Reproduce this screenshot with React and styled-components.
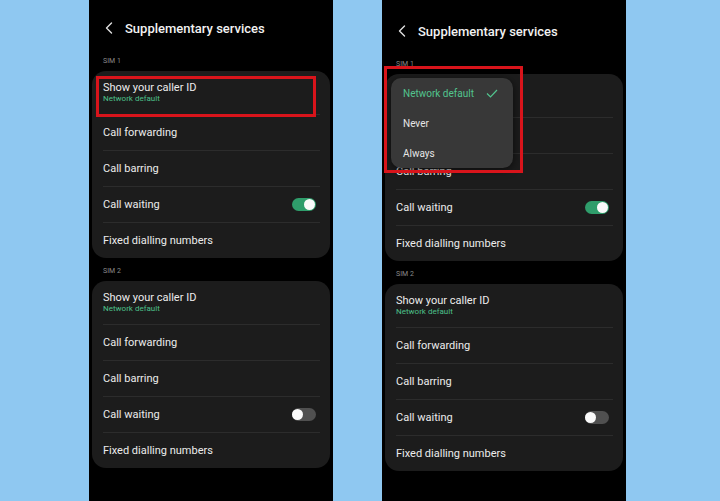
import React from 'react';
import styled, { createGlobalStyle } from 'styled-components';

const GlobalStyle = createGlobalStyle`
  html, body {
    margin: 0;
    padding: 0;
    background: #8fc8f1;
  }
  body {
    font-family: Roboto, "Liberation Sans", sans-serif;
  }
`;

const Page = styled.div`
  width: 720px;
  height: 501px;
  display: flex;
  gap: 49px;
  padding-left: 89px;
  box-sizing: border-box;
  overflow: hidden;
  background: #8fc8f1;
`;

const Phone = styled.div`
  position: relative;
  display: flex;
  flex-direction: column;
  width: 244px;
  height: 501px;
  background: #000;
  padding: ${p => p.$shift}px 3px 0;
  box-sizing: border-box;
`;

const Header = styled.div`
  display: flex;
  align-items: center;
  height: 18px;
  margin: 19px 0 11px;
  padding-left: 13px;
`;

const Back = styled.svg`
  width: 8px;
  height: 12px;
  margin-right: 12px;
`;

const Title = styled.div`
  color: #f2f2f2;
  font-size: 13px;
  font-weight: 500;
`;

const SimLabel = styled.div`
  color: #8a8a8a;
  font-size: 7px;
  line-height: 10px;
  margin: ${p => (p.$first ? 8 : 8)}px 0 5px 11px;
`;

const Card = styled.div`
  background: #1c1c1c;
  border-radius: 14px;
`;

const Row = styled.div`
  display: flex;
  align-items: center;
  justify-content: space-between;
  height: ${p => (p.$tall ? 43 : 36)}px;
  margin: 0 10px 0 11px;
  padding-right: 4px;
  border-top: ${p => (p.$tall ? 'none' : '1px solid #2c2c2c')};
  box-sizing: border-box;
`;

const RowText = styled.div`
  display: flex;
  flex-direction: column;
`;

const RowTitle = styled.span`
  color: #ececec;
  font-size: 11px;
  line-height: 13px;
`;

const RowSub = styled.span`
  color: #4cc08a;
  font-size: 8px;
  line-height: 10px;
`;

const Toggle = styled.div`
  position: relative;
  width: 24px;
  height: 13px;
  border-radius: 7px;
  background: ${p => (p.$on ? '#2f9d6b' : '#505050')};
  &::after {
    content: '';
    position: absolute;
    top: 1px;
    ${p => (p.$on ? 'right: 1px;' : 'left: 0;')}
    width: 11px;
    height: 11px;
    border-radius: 50%;
    background: #fafafa;
  }
`;

const Highlight = styled.div`
  position: absolute;
  left: ${p => p.$x}px;
  top: ${p => p.$y}px;
  width: ${p => p.$w}px;
  height: ${p => p.$h}px;
  border: 3px solid #d8141b;
  box-sizing: border-box;
  z-index: 3;
`;

const Popup = styled.div`
  position: absolute;
  left: 9px;
  top: 78px;
  width: 122px;
  height: 90px;
  background: #383838;
  border-radius: 10px;
  box-shadow: 0 2px 8px rgba(0, 0, 0, 0.6);
  z-index: 2;
`;

const Option = styled.div`
  display: flex;
  align-items: center;
  height: 30px;
  padding-left: 12px;
  gap: 12px;
  font-size: 10px;
  color: ${p => (p.$selected ? '#52c48e' : '#e6e6e6')};
`;

const Check = styled.svg`
  width: 12px;
  height: 9px;
`;

const SimCard = ({ on }) => (
  <Card>
    <Row $tall>
      <RowText>
        <RowTitle>Show your caller ID</RowTitle>
        <RowSub>Network default</RowSub>
      </RowText>
    </Row>
    <Row><RowTitle>Call forwarding</RowTitle></Row>
    <Row><RowTitle>Call barring</RowTitle></Row>
    <Row>
      <RowTitle>Call waiting</RowTitle>
      <Toggle $on={on} />
    </Row>
    <Row><RowTitle>Fixed dialling numbers</RowTitle></Row>
  </Card>
);

const Screen = ({ shift, popup }) => (
  <Phone $shift={shift}>
    <Header>
      <Back viewBox="0 0 8 12">
        <path d="M6.5 1L1.5 6l5 5" fill="none" stroke="#e0e0e0" strokeWidth="1.4" strokeLinecap="round" strokeLinejoin="round" />
      </Back>
      <Title>Supplementary services</Title>
    </Header>
    <SimLabel $first>SIM 1</SimLabel>
    <SimCard on />
    <SimLabel>SIM 2</SimLabel>
    <SimCard on={false} />
    {popup ? (
      <>
        <Popup>
          <Option $selected>
            Network default
            <Check viewBox="0 0 12 9">
              <path d="M1 4.5l3.5 3.5L11 1" fill="none" stroke="#52c48e" strokeWidth="1.2" />
            </Check>
          </Option>
          <Option>Never</Option>
          <Option>Always</Option>
        </Popup>
        <Highlight $x={2} $y={66} $w={139} $h={107} />
      </>
    ) : (
      <Highlight $x={7} $y={76} $w={220} $h={41} />
    )}
  </Phone>
);

export default function App() {
  return (
    <>
      <GlobalStyle />
      <Page>
        <Screen shift={0} />
        <Screen shift={3} popup />
      </Page>
    </>
  );
}
